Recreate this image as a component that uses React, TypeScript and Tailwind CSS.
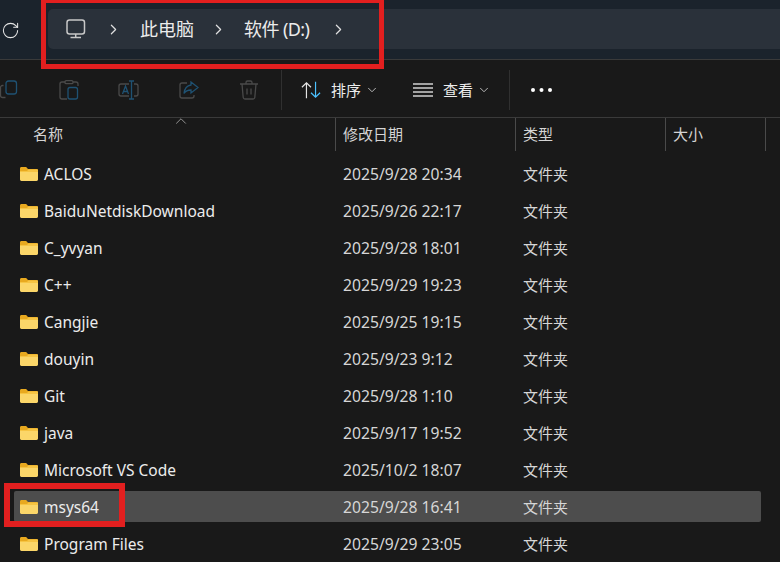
import { ChevronDown, ChevronRight, ChevronUp, RotateCw } from "lucide-react";

const files = [
  { name: "ACLOS", date: "2025/9/28 20:34" },
  { name: "BaiduNetdiskDownload", date: "2025/9/26 22:17" },
  { name: "C_yvyan", date: "2025/9/28 18:01" },
  { name: "C++", date: "2025/9/29 19:23" },
  { name: "Cangjie", date: "2025/9/25 19:15" },
  { name: "douyin", date: "2025/9/23 9:12" },
  { name: "Git", date: "2025/9/28 1:10" },
  { name: "java", date: "2025/9/17 19:52" },
  { name: "Microsoft VS Code", date: "2025/10/2 18:07" },
  { name: "msys64", date: "2025/9/28 16:41", selected: true },
  { name: "Program Files", date: "2025/9/29 23:05" },
];

const FolderIcon = () => (
  <svg width="18" height="16" viewBox="0 0 18 16" className="shrink-0">
    <path d="M0 2.500C0 1.700.6 1 1.400 1h4.200c.4 0 .7.1 1 .4L8 3h8.600c.8 0 1.400.6 1.400 1.400V6H0z" fill="#e8a91f" />
    <path d="M0 5h18v8.600c0 .8-.6 1.400-1.400 1.400H1.400C.6 15 0 14.400 0 13.600z" fill="#fbd669" />
    <path d="M0 5h7l1.500-1.600H18V6H0z" fill="#f6c443" />
  </svg>
);

const ToolbarIcons = () => (
  <>
    {/* copy */}
    <svg width="18" height="20" viewBox="0 0 18 20" fill="none" strokeWidth="1.300">
      <rect x="6" y="1" width="10.500" height="13" rx="2.500" stroke="#1f5273" />
      <path d="M3.500 5.500H2.500A2 2 0 0 0 .5 7.500v8a2 2 0 0 0 2 2h3" stroke="#4a4a4a" />
    </svg>
    {/* paste */}
    <svg width="20" height="20" viewBox="0 0 20 20" fill="none" strokeWidth="1.300" className="ml-[41px]">
      <path d="M6 2H3a2 2 0 0 0-2 2v13a2 2 0 0 0 2 2h5M14 2h3a2 2 0 0 1 2 2v2" stroke="#4a4a4a" />
      <rect x="6" y=".7" width="8" height="3" rx="1.200" stroke="#4a4a4a" />
      <rect x="9" y="7.500" width="9.500" height="11.500" rx="2" stroke="#1f5273" />
    </svg>
    {/* rename */}
    <svg width="21" height="20" viewBox="0 0 21 20" fill="none" strokeWidth="1.300" className="ml-[39px]">
      <path d="M11 4H3a2 2 0 0 0-2 2v8a2 2 0 0 0 2 2h8M16 4h2a2 2 0 0 1 2 2v8a2 2 0 0 1-2 2h-2" stroke="#4a4a4a" />
      <path d="M11 1h5M13.500 1v18M11 19h5M4.500 14l3-8 3 8M5.500 11.500h4" stroke="#1f5273" />
    </svg>
    {/* share */}
    <svg width="20" height="20" viewBox="0 0 20 20" fill="none" strokeWidth="1.300" className="ml-[40px]">
      <path d="M8 3H3a2 2 0 0 0-2 2v11a2 2 0 0 0 2 2h10a2 2 0 0 0 2-2v-1" stroke="#4a4a4a" />
      <path d="M12 2l7 5.500-7 5.500V10C8.500 10 6.500 11 5 13.500 5.500 9 8 5.500 12 5z" stroke="#1f5273" />
    </svg>
    {/* delete */}
    <svg width="20" height="20" viewBox="0 0 20 20" fill="none" stroke="#4a4a4a" strokeWidth="1.300" className="ml-[40px]">
      <path d="M1 4h18M7 4V2.500A1.500 1.500 0 0 1 8.500 1h3A1.500 1.500 0 0 1 13 2.500V4M3 4l1.200 13.500A1.800 1.800 0 0 0 6 19h8a1.800 1.800 0 0 0 1.800-1.500L17 4M8 8.500v6M12 8.500v6" />
    </svg>
  </>
);

export default function App() {
  return (
    <div
      className="w-[780px] h-[562px] overflow-hidden bg-[#191919] text-[#ececec] text-[15px]"
      style={{ fontFamily: '"Noto Sans", "Noto Sans CJK SC", sans-serif' }}
    >
      {/* address bar */}
      <div className="relative flex h-[60px] border-b border-[#3a3a3a] bg-[#1b232c] pt-[9px]">
        <div className="flex h-[40px] w-[48px] items-center">
          <RotateCw size={19} strokeWidth={1.300} className="ml-[1px] mt-[2px] text-[#e6e6e6]" />
        </div>
        <div className="flex h-[40px] flex-1 items-center rounded-l-[5px] bg-[#2a313a] pl-[18px]">
          <svg width="20" height="20" viewBox="0 0 20 20" fill="none" stroke="#c8c8c8" strokeWidth="1.500">
            <rect x="1" y="1" width="17.500" height="14" rx="2.500" />
            <path d="M9.700 15v3M4.500 18.500h10.500" />
          </svg>
          <ChevronRight size={17} strokeWidth={1.700} className="ml-[19px] text-[#e0e0e0]" />
          <span className="ml-[18px] text-[18px] leading-none">此电脑</span>
          <ChevronRight size={17} strokeWidth={1.700} className="ml-[16px] text-[#e0e0e0]" />
          <span className="ml-[17px] text-[18px] leading-none tracking-[-0.6px]">软件 (D:)</span>
          <ChevronRight size={17} strokeWidth={1.700} className="ml-[21px] text-[#e0e0e0]" />
        </div>
        <div className="absolute left-[41px] top-[-2px] h-[71px] w-[343px] border-[5px] border-[#e21f1f]" />
      </div>

      {/* toolbar */}
      <div className="flex h-[58px] items-center border-b border-[#3a3a3a] pt-[3px]">
        <div className="flex w-[281px] items-center">
          <ToolbarIcons />
        </div>
        <div className="flex h-[40px] w-[229px] items-center border-x border-[#303030]">
          <svg width="20" height="20" viewBox="0 0 22 20" fill="none" strokeWidth="1.300" className="ml-[19px]">
            <path d="M6 19V2M1 7l5-5 5 5" stroke="#e4e4e4" />
            <path d="M16 1v17M11 13l5 5 5-5" stroke="#4cc2ff" />
          </svg>
          <span className="ml-[10px]">排序</span>
          <ChevronDown size={14} strokeWidth={1.500} className="ml-[4px] text-[#cccccc]" />
          <svg width="20" height="14" viewBox="0 0 20 14" fill="none" stroke="#d0d0d0" strokeWidth="1.300" className="ml-[34px]">
            <path d="M0 1h20M0 5h20M0 9h20M0 13h20" />
          </svg>
          <span className="ml-[10px]">查看</span>
          <ChevronDown size={14} strokeWidth={1.500} className="ml-[4px] text-[#cccccc]" />
        </div>
        <svg width="21" height="4" viewBox="0 0 21 4" fill="#ffffff" className="ml-[21px]">
          <circle cx="2" cy="2" r="2" />
          <circle cx="10.500" cy="2" r="2" />
          <circle cx="19" cy="2" r="2" />
        </svg>
      </div>

      {/* column headers */}
      <div className="relative flex h-[33px] leading-[32px] text-[#d4d4d4]">
        <ChevronUp size={18} strokeWidth={1} className="absolute left-[172px] top-[-6px] text-[#bbbbbb]" />
        <div className="w-[336px] border-r border-[#4a4a4a] pl-[33px]">名称</div>
        <div className="w-[180px] border-r border-[#4a4a4a] pl-[7px]">修改日期</div>
        <div className="w-[150px] border-r border-[#4a4a4a] pl-[7px]">类型</div>
        <div className="w-[100px] border-r border-[#4a4a4a] pl-[7px]">大小</div>
      </div>

      {/* rows */}
      <div className="pt-[4px]">
        {files.map((f) => (
          <div key={f.name} className="relative flex h-[37px] items-center">
            <div className={`ml-[14px] flex h-[31px] w-[747px] items-center rounded-[2px] ${f.selected ? "bg-[#4d4d4d]" : ""}`}>
              <div className="flex w-[322px] items-center pl-[6px]">
                <FolderIcon />
                <span className="ml-[6px] mt-[2px] whitespace-nowrap text-[15.500px]">{f.name}</span>
              </div>
              <span className="mt-[2px] w-[180px] pl-[7px] text-[15.700px] text-[#d6d6d6]">{f.date}</span>
              <span className="mt-[2px] pl-[7px] text-[#d6d6d6]">文件夹</span>
            </div>
            {f.selected && (
              <div className="absolute left-[4px] top-[-5px] h-[44px] w-[121px] border-[6px] border-[#e21f1f]" />
            )}
          </div>
        ))}
      </div>
    </div>
  );
}
